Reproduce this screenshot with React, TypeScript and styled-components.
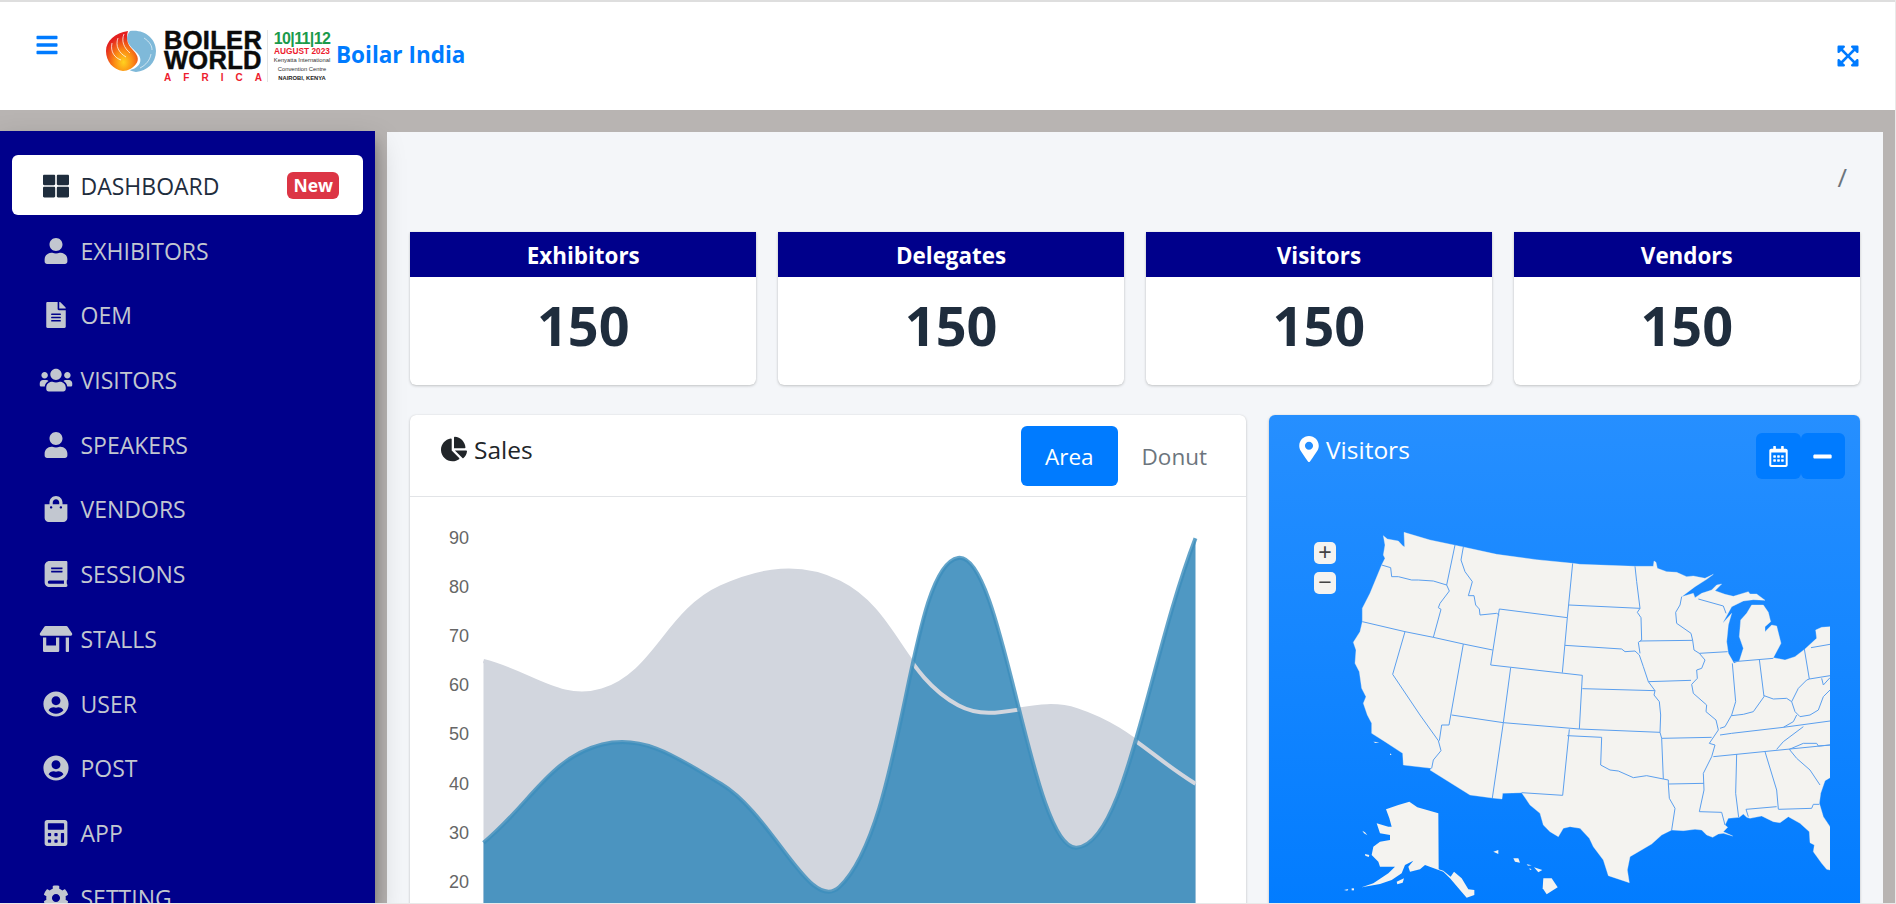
import React from "react";
import styled, { createGlobalStyle } from "styled-components";
import {
  FaBars,
  FaBook,
  FaCalculator,
  FaChartPie,
  FaCog,
  FaExpandArrowsAlt,
  FaFileAlt,
  FaMapMarkerAlt,
  FaMinus,
  FaRegCalendarAlt,
  FaShoppingBag,
  FaStoreAlt,
  FaThLarge,
  FaUser,
  FaUserCircle,
  FaUsers,
} from "react-icons/fa";

const NAV_ITEMS = [
  { label: "DASHBOARD", icon: FaThLarge, active: true },
  { label: "EXHIBITORS", icon: FaUser },
  { label: "OEM", icon: FaFileAlt },
  { label: "VISITORS", icon: FaUsers },
  { label: "SPEAKERS", icon: FaUser },
  { label: "VENDORS", icon: FaShoppingBag },
  { label: "SESSIONS", icon: FaBook },
  { label: "STALLS", icon: FaStoreAlt },
  { label: "USER", icon: FaUserCircle },
  { label: "POST", icon: FaUserCircle },
  { label: "APP", icon: FaCalculator },
  { label: "SETTING", icon: FaCog },
];

const STATS = ["Exhibitors", "Delegates", "Visitors", "Vendors"];

// chart geometry is in page pixels, the svg viewBox starts at the card body corner
const CHART_LEFT = 483.5;
const CHART_RIGHT = 1195.5;
const CHART_BOTTOM = 960;
const xAt = (i: number) => CHART_LEFT + (i * (CHART_RIGHT - CHART_LEFT)) / 6;
const yAt = (v: number) => 539.3 + (90 - v) * 4.91;
const TICKS = [90, 80, 70, 60, 50, 40, 30, 20];

const splinePath = (data: number[]) => {
  const pts = data.map((v, i) => ({ x: xAt(i), y: yAt(v) }));
  const ctrl = pts.map((cur, i) => {
    const prev = pts[i - 1] || cur;
    const next = pts[i + 1] || cur;
    const d01 = Math.hypot(cur.x - prev.x, cur.y - prev.y);
    const d12 = Math.hypot(next.x - cur.x, next.y - cur.y);
    const total = d01 + d12 || 1;
    const fa = (0.4 * d01) / total;
    const fb = (0.4 * d12) / total;
    return {
      inX: cur.x - fa * (next.x - prev.x),
      inY: cur.y - fa * (next.y - prev.y),
      outX: cur.x + fb * (next.x - prev.x),
      outY: cur.y + fb * (next.y - prev.y),
    };
  });
  let d = `M${pts[0].x} ${pts[0].y}`;
  for (let i = 1; i < pts.length; i++) {
    d += ` C${ctrl[i - 1].outX} ${ctrl[i - 1].outY} ${ctrl[i].inX} ${ctrl[i].inY} ${pts[i].x} ${pts[i].y}`;
  }
  return d;
};

const GREY_LINE = splinePath([65, 59, 80, 81, 56, 55, 40]);
const BLUE_LINE = splinePath([28, 48, 40, 19, 86, 27, 90]);
const closeArea = (d: string) =>
  `${d} L${CHART_RIGHT} ${CHART_BOTTOM} L${CHART_LEFT} ${CHART_BOTTOM} Z`;

// map units: 3 per page pixel, origin at the top left of the map svg
const LAND =
  "M160 32 172 42 205 48 218 62 224 66 222 22 300 45 400 66 500 88 620 104 728 115 750 118 915 124 970 124 972 108 978 112 982 130 1010 140 1040 142 1070 155 1090 153 1125 160 1150 148 1130 163 1095 185 1055 215 1090 205 1095 218 1115 205 1145 195 1160 180 1175 177 1155 197 1185 208 1210 214 1255 200 1260 207 1280 207 1300 222 1305 226 1270 224 1240 228 1205 245 1178 295 1205 265 1195 300 1190 350 1195 385 1212 415 1228 408 1240 370 1228 335 1232 285 1250 265 1265 240 1300 240 1315 262 1322 290 1305 305 1305 320 1325 300 1340 303 1353 355 1330 398 1365 405 1395 395 1425 372 1460 340 1457 315 1475 307 1500 305 1500 758 1485 767 1472 805 1468 835 1480 875 1500 905 1500 1035 1490 1033 1475 1015 1450 980 1453 960 1440 953 1438 920 1410 895 1375 875 1350 893 1330 890 1295 873 1260 880 1250 877 1240 867 1228 877 1195 880 1185 900 1193 907 1180 920 1208 933 1180 925 1165 927 1148 937 1130 930 1115 915 1095 913 1060 917 1025 915 995 930 965 957 900 995 892 1035 898 1073 835 1052 820 1005 790 965 778 940 750 910 720 905 700 910 685 935 660 920 640 900 630 865 600 840 575 803 518 805 516 822 487 819 420 810 300 735 305 730 220 720 218 685 195 670 165 650 125 625 125 595 112 570 100 535 108 515 95 490 88 440 75 415 78 375 70 352 90 320 97 290 97 250 120 205 155 120 165 100 160 90 165 60Z";

const ISLANDS = [
  "M168 853 205 840 238 830 262 847 325 865 326 1033 340 1037 362 1055 372 1040 395 1060 415 1093 433 1095 433 1110 410 1118 390 1095 360 1060 340 1040 285 1020 270 1033 240 1040 235 1025 250 1007 225 1020 215 1045 185 1065 150 1077 95 1087 130 1075 175 1045 195 1025 150 1025 145 1010 125 990 130 965 150 950 180 945 180 930 150 925 140 895 175 905 185 905 178 880Z",
  "M200 1070 222 1060 218 1073 202 1078Z",
  "M42 1095 55 1092 52 1097Z",
  "M65 1090 72 1090 72 1096 65 1096Z",
  "M105 987 118 990 116 996 106 992Z",
  "M97 917 105 922 112 931 102 925Z",
  "M640 1060 665 1060 683 1087 650 1108 638 1090Z",
  "M612 1027 637 1035 625 1042Z",
  "M550 1000 565 1000 570 1013 555 1010Z",
  "M490 980 505 975 505 987Z",
  "M590 1018 605 1021 594 1022Z",
  "M598 1030 605 1033 600 1035Z",
  "M130 650 148 652 136 654Z",
  "M180 685 185 690 180 690Z",
];

const BORDERS = [
  "M155 120 182 128 185 155 205 155 245 165 265 165 310 168 350 180",
  "M375 60 350 180 358 198 330 235 325 248 333 253 310 337",
  "M97 290 225 320 310 337 400 357 488 375",
  "M400 66 393 105 405 140 427 170 420 195 415 212 432 212 437 240 448 252 450 270 500 265 508 270",
  "M728 115 712 278 697 443",
  "M508 252 712 278",
  "M508 252 482 420 757 451 748 612",
  "M717 240 930 250",
  "M705 361 875 372 885 380 915 378 928 390 940 425 955 470 975 497 972 510 988 530 992 570 990 622 995 640 1000 762",
  "M757 491 975 497",
  "M225 320 188 448 270 570 325 647 333 677 310 705 305 730",
  "M400 357 365 555 357 600 335 600 328 647",
  "M365 570 520 593 748 612 990 622",
  "M542 428 520 593 487 819",
  "M718 613 698 811 575 803",
  "M712 632 815 637 812 720 840 735 865 738 910 758 950 752 1000 762 1015 765 1015 777 1018 820 1035 850 1025 915",
  "M995 640 1145 637",
  "M1015 777 1122 775",
  "M915 124 920 170 930 250 922 262 933 278 935 345 925 352 930 385",
  "M930 348 1088 346",
  "M955 470 1083 466",
  "M1055 215 1050 240 1037 262 1040 295 1083 325 1088 346 1092 375 1108 385 1125 405 1115 430 1100 435 1102 460 1085 478 1090 505 1130 540 1128 560 1158 585 1165 615 1138 655 1155 660 1145 695 1120 745 1122 795 1108 860 1175 862 1185 900",
  "M1108 385 1193 380",
  "M1105 222 1180 243 1188 265",
  "M1207 415 1217 530 1205 570 1185 605 1170 610",
  "M1288 403 1302 515",
  "M1212 410 1330 400",
  "M1302 512 1330 522 1370 520 1385 530 1405 490 1430 465 1438 462 1423 372",
  "M1302 515 1270 560 1240 568 1205 572",
  "M1443 368 1500 358",
  "M1438 462 1500 452",
  "M1385 530 1395 560 1410 575 1440 570 1465 555 1480 515 1500 495",
  "M1475 460 1480 480 1500 458",
  "M1170 630 1205 625 1360 607 1500 588",
  "M1360 607 1390 590 1400 570",
  "M1150 695 1380 672 1500 660",
  "M1340 673 1360 650 1420 605",
  "M1378 673 1420 655 1460 655 1465 663 1500 660",
  "M1378 673 1400 700 1440 735 1470 780",
  "M1220 687 1217 805 1226 877",
  "M1305 680 1340 795 1345 852",
  "M1248 853 1340 845",
  "M1345 853 1445 850 1450 838 1468 838",
  "M1248 853 1255 875",
];

const GlobalStyle = createGlobalStyle`
  html, body {
    margin: 0;
    height: 100%;
    overflow: hidden;
    background: #b8b4b2;
    font-family: "Open Sans", "Noto Sans", "Liberation Sans", sans-serif;
  }
  * { box-sizing: border-box; }
`;

const Page = styled.div`
  height: 904px;
  overflow: hidden;
  background: #b8b4b2;
  border-right: 1px solid #e9e9e9;
  border-bottom: 1px solid #e9e9e9;
`;

const TopBar = styled.header`
  height: 110px;
  display: flex;
  align-items: center;
  background: #fff;
  border-top: 2px solid #dedede;
  padding: 0 36px;
  color: #007bff;
`;

const MenuButton = styled.span`
  display: flex;
  align-self: flex-start;
  margin: 31px 47.5px 0 -1.5px;
  font-size: 24px;
`;

const Logo = styled.div`
  display: flex;
  align-items: flex-start;
`;

const LogoWords = styled.div`
  width: 98px;
  margin-left: 7px;
  color: #0b0b0b;
  font-family: "Liberation Sans", Arial, sans-serif;
  font-weight: 700;
  font-size: 25.5px;
  line-height: 20px;
  letter-spacing: 0.3px;
  -webkit-text-stroke: 0.5px #0b0b0b;
`;

const LogoAfrica = styled.div`
  display: flex;
  justify-content: space-between;
  color: #ed1c2e;
  font-size: 10px;
  line-height: 11px;
  letter-spacing: 0;
  -webkit-text-stroke: 0;
  margin-top: 2px;
`;

const LogoDates = styled.div`
  width: 56px;
  margin-left: 12px;
  display: flex;
  flex-direction: column;
  align-items: center;
  font-family: "Liberation Sans", Arial, sans-serif;
  position: relative;
  &::before {
    content: "";
    position: absolute;
    left: -7px;
    top: 0;
    bottom: 0;
    width: 1px;
    background: #e4e4e4;
  }
`;

const LogoDays = styled.div`
  color: #1a9a4b;
  font-weight: 700;
  font-size: 16px;
  line-height: 16px;
  letter-spacing: -0.6px;
  margin-top: 1px;
`;

const LogoMonth = styled.div`
  color: #ed1c2e;
  font-weight: 700;
  font-size: 8.3px;
  line-height: 9px;
  white-space: nowrap;
`;

const LogoVenue = styled.div`
  color: #333;
  font-size: 5.8px;
  line-height: 9px;
  white-space: nowrap;
  &:last-of-type {
    padding-bottom: 3px;
    border-bottom: 1px solid #ddd;
    margin-bottom: 1px;
  }
`;

const LogoCity = styled.div`
  color: #222;
  font-weight: 700;
  font-size: 5.8px;
  line-height: 8px;
  white-space: nowrap;
`;

const Brand = styled.div`
  margin: -4px 0 0 6px;
  font-weight: 700;
  font-size: 22.5px;
  color: #007bff;
`;

const ExpandButton = styled.span`
  display: flex;
  margin-left: auto;
  margin-right: -1px;
  font-size: 24px;
`;

const Shell = styled.div`
  display: flex;
  padding-top: 21px;
`;

const Sidebar = styled.nav`
  flex: 0 0 375px;
  height: 773px;
  padding: 24px 12px 0;
  overflow: hidden;
  background: #00008b;
  box-shadow: 0 14px 28px rgba(0, 0, 0, 0.25), 0 10px 10px rgba(0, 0, 0, 0.22);
  position: relative;
  z-index: 1;
`;

const NavItem = styled.div<{ $active?: boolean }>`
  display: flex;
  align-items: center;
  height: 60px;
  margin-bottom: 4.7px;
  padding: 2px 24px 0 20px;
  border-radius: 6px;
  font-size: 23px;
  background: ${(p) => (p.$active ? "#fff" : "transparent")};
  color: ${(p) => (p.$active ? "#1f2d3d" : "#c2c7d0")};
`;

const NavIcon = styled.span`
  display: flex;
  justify-content: center;
  width: 48.5px;
  svg {
    width: 34px;
    height: 26px;
  }
`;

const Badge = styled.span`
  margin: -2px 0 0 auto;
  padding: 0 6px;
  height: 27px;
  line-height: 26px;
  border-radius: 6px;
  background: #dc3545;
  color: #fff;
  font-weight: 700;
  font-size: 17.5px;
`;

const Content = styled.main`
  flex: 0 0 1496px;
  margin: 1px 0 0 12px;
  height: 772px;
  padding: 0 23px;
  overflow: hidden;
  background: #f4f6f9;
`;

const Breadcrumb = styled.div`
  height: 100px;
  padding: 25px 13px 0 0;
  text-align: right;
  font-size: 26px;
  line-height: 40px;
  color: #6c757d;
`;

const StatRow = styled.section`
  display: grid;
  grid-template-columns: repeat(4, 1fr);
  column-gap: 21.4px;
  margin-bottom: 30px;
`;

const StatCard = styled.div`
  height: 153px;
  background: #fff;
  border-radius: 0 0 6px 6px;
  box-shadow: 0 0 1px rgba(0, 0, 0, 0.125), 0 1px 3px rgba(0, 0, 0, 0.2);
  text-align: center;
`;

const StatTitle = styled.div`
  height: 45px;
  background: #00008b;
  color: #fff;
  font-weight: 700;
  font-size: 22.4px;
  line-height: 47px;
`;

const StatValue = styled.div`
  font-weight: 700;
  font-size: 54px;
  line-height: 96px;
  color: #1f2d3d;
`;

const ChartRow = styled.section`
  display: grid;
  grid-template-columns: 836px 591px;
  column-gap: 23px;
`;

const SalesCard = styled.div`
  height: 520px;
  background: #fff;
  border-radius: 6px;
  box-shadow: 0 0 1px rgba(0, 0, 0, 0.125), 0 1px 3px rgba(0, 0, 0, 0.2);
`;

const SalesHeader = styled.div`
  display: flex;
  height: 82px;
  padding: 11px 15px 0 31px;
  border-bottom: 1px solid #e2e4e7;
`;

const CardTitle = styled.div<{ $light?: boolean }>`
  display: flex;
  align-items: center;
  gap: 7px;
  height: 26px;
  margin-top: 10px;
  font-size: 24.5px;
  color: ${(p) => (p.$light ? "#fff" : "#212529")};
  svg {
    font-size: 26px;
    margin: ${(p) => (p.$light ? "0 -3px" : "0")};
  }
`;

const Tabs = styled.div`
  display: flex;
  margin-left: auto;
`;

const Tab = styled.div<{ $active?: boolean }>`
  height: 60px;
  padding: 0 24px;
  border-radius: 6px;
  font-size: 22.5px;
  line-height: 62px;
  background: ${(p) => (p.$active ? "#007bff" : "transparent")};
  color: ${(p) => (p.$active ? "#fff" : "#6c757d")};
`;

const ChartSvg = styled.svg`
  display: block;
`;

const AxisLabel = styled.text`
  font-family: "Liberation Sans", Arial, sans-serif;
  font-size: 18px;
  fill: #666;
`;

const VisitorsCard = styled.div`
  height: 520px;
  padding: 11px 15px 0 30px;
  border-radius: 6px;
  background: linear-gradient(180deg, #268fff, #007bff);
  box-shadow: 0 0 1px rgba(0, 0, 0, 0.125), 0 1px 3px rgba(0, 0, 0, 0.2);
`;

const VisitorsHeader = styled.div`
  display: flex;
  height: 99px;
`;

const ToolGroup = styled.div`
  display: flex;
  margin: 7px 0 0 auto;
`;

const ToolButton = styled.span`
  display: flex;
  align-items: center;
  justify-content: center;
  width: 44.5px;
  height: 46px;
  border-radius: 6px;
  background: #007bff;
  color: #fff;
  font-size: 21px;
`;

const MapArea = styled.div`
  position: relative;
  width: 500px;
  height: 379px;
  margin-left: 31px;
`;

const MapSvg = styled.svg`
  display: block;
  width: 500px;
  height: 379px;
`;

const ZoomButton = styled.span<{ $top: number }>`
  position: absolute;
  left: -16px;
  top: ${(p) => p.$top}px;
  width: 22px;
  height: 22px;
  border-radius: 5px;
  background: #f4f3f0;
  color: #444;
  font-family: "Liberation Sans", Arial, sans-serif;
  font-size: 23px;
  line-height: 21px;
  text-align: center;
`;

const FlameMark = () => (
  <svg width="51" height="42" viewBox="0 0 51 42" aria-hidden="true">
    <defs>
      <radialGradient id="flame" cx="55%" cy="78%" r="65%">
        <stop offset="0" stopColor="#ffd21f" />
        <stop offset="0.45" stopColor="#fb8b14" />
        <stop offset="1" stopColor="#e3201f" />
      </radialGradient>
    </defs>
    <path
      d="M24 1C38 -1 50 8 50 21 50 33 41 41 30 42 27 41 24 41 24 40 34 38 37 30 32 24 29 20 22 16 21 9 21 6 22 3 24 1Z"
      fill="#7fb9d9"
    />
    <path
      d="M22 1C20 8 21 14 26 19 31 24 34 29 30 34 27 38 22 41 17 41 7 40 0 31 0 21 0 11 9 3 22 1Z"
      fill="url(#flame)"
    />
    <path
      d="M6 13C4 22 9 28 15 30M12 8C9 16 13 23 20 27M18 4C15 11 18 18 24 23"
      fill="none"
      stroke="#fff"
      strokeWidth="1"
      opacity="0.75"
    />
    <path d="M34 38C40 35 44 30 45 24M38 8C44 12 46 16 46 20" fill="none" stroke="#fff" strokeWidth="1" opacity="0.6" />
  </svg>
);

const UsaMap = () => (
  <MapSvg viewBox="0 0 1500 1137" aria-hidden="true">
    <path d={LAND} fill="#f4f3f0" stroke="#f4f3f0" strokeWidth="1" strokeLinejoin="round" />
    {ISLANDS.map((d) => (
      <path key={d} d={d} fill="#f4f3f0" />
    ))}
    {BORDERS.map((d) => (
      <path
        key={d}
        d={d}
        fill="none"
        stroke="#5b9fee"
        strokeWidth="3"
        strokeLinejoin="round"
      />
    ))}
  </MapSvg>
);

const SalesChart = () => (
  <ChartSvg width="836" height="406" viewBox="410 498 836 406" aria-hidden="true">
    {TICKS.map((tick, i) => (
      <AxisLabel key={tick} x="469" y={544.5 + i * 49.2} textAnchor="end">
        {tick}
      </AxisLabel>
    ))}
    <path d={closeArea(GREY_LINE)} fill="#d2d6de" />
    <path d={closeArea(BLUE_LINE)} fill="rgba(60,141,188,0.9)" />
    <path d={GREY_LINE} fill="none" stroke="#d2d6de" strokeWidth="4" />
    <path d={BLUE_LINE} fill="none" stroke="rgba(60,141,188,0.8)" strokeWidth="4" />
  </ChartSvg>
);

export default function App() {
  return (
    <Page>
      <GlobalStyle />
      <TopBar>
        <MenuButton>
          <FaBars />
        </MenuButton>
        <Logo>
          <FlameMark />
          <LogoWords>
            BOILER
            <br />
            WORLD
            <LogoAfrica>
              {"AFRICA".split("").map((letter, i) => (
                <span key={i}>{letter}</span>
              ))}
            </LogoAfrica>
          </LogoWords>
          <LogoDates>
            <LogoDays>10|11|12</LogoDays>
            <LogoMonth>AUGUST 2023</LogoMonth>
            <LogoVenue>Kenyatta International</LogoVenue>
            <LogoVenue>Convention Centre</LogoVenue>
            <LogoCity>NAIROBI, KENYA</LogoCity>
          </LogoDates>
        </Logo>
        <Brand>Boilar India</Brand>
        <ExpandButton>
          <FaExpandArrowsAlt />
        </ExpandButton>
      </TopBar>
      <Shell>
        <Sidebar>
          {NAV_ITEMS.map(({ label, icon: Icon, active }) => (
            <NavItem key={label} $active={active}>
              <NavIcon>
                <Icon />
              </NavIcon>
              {label}
              {active && <Badge>New</Badge>}
            </NavItem>
          ))}
        </Sidebar>
        <Content>
          <Breadcrumb>/</Breadcrumb>
          <StatRow>
            {STATS.map((title) => (
              <StatCard key={title}>
                <StatTitle>{title}</StatTitle>
                <StatValue>150</StatValue>
              </StatCard>
            ))}
          </StatRow>
          <ChartRow>
            <SalesCard>
              <SalesHeader>
                <CardTitle>
                  <FaChartPie />
                  Sales
                </CardTitle>
                <Tabs>
                  <Tab $active>Area</Tab>
                  <Tab>Donut</Tab>
                </Tabs>
              </SalesHeader>
              <SalesChart />
            </SalesCard>
            <VisitorsCard>
              <VisitorsHeader>
                <CardTitle $light>
                  <FaMapMarkerAlt />
                  Visitors
                </CardTitle>
                <ToolGroup>
                  <ToolButton>
                    <FaRegCalendarAlt />
                  </ToolButton>
                  <ToolButton>
                    <FaMinus />
                  </ToolButton>
                </ToolGroup>
              </VisitorsHeader>
              <MapArea>
                <UsaMap />
                <ZoomButton $top={17}>+</ZoomButton>
                <ZoomButton $top={47}>−</ZoomButton>
              </MapArea>
            </VisitorsCard>
          </ChartRow>
        </Content>
      </Shell>
    </Page>
  );
}
